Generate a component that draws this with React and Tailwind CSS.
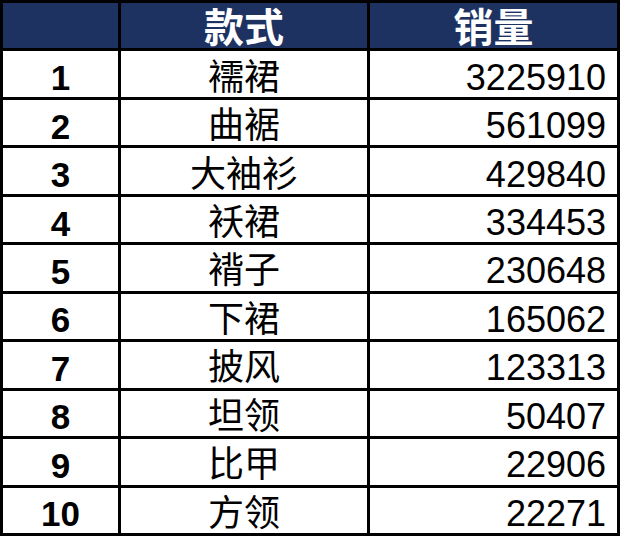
import React from "react";

const rows = [
  ["1", "襦裙", "3225910"],
  ["2", "曲裾", "561099"],
  ["3", "大袖衫", "429840"],
  ["4", "袄裙", "334453"],
  ["5", "褙子", "230648"],
  ["6", "下裙", "165062"],
  ["7", "披风", "123313"],
  ["8", "坦领", "50407"],
  ["9", "比甲", "22906"],
  ["10", "方领", "22271"],
];

const font = { fontFamily: '"Liberation Sans", "Noto Sans CJK SC", sans-serif' };

export default function App() {
  return (
    <div
      className="w-[620px] h-[536px] bg-black p-[3px] grid grid-cols-[115px_246px_1fr] grid-rows-11 gap-[3px]"
      style={font}
    >
      <div className="bg-[#1e3262]" />
      <div className="bg-[#1e3262] flex items-center justify-center text-white font-bold text-[40px] leading-none pt-[5px]">
        款式
      </div>
      <div className="bg-[#1e3262] flex items-center justify-center text-white font-bold text-[40px] leading-none pt-[5px]">
        销量
      </div>
      {rows.map(([n, name, v]) => (
        <React.Fragment key={n}>
          <div className="bg-white flex items-center justify-center text-black font-bold text-[35px] leading-none pt-[7px]">
            {n}
          </div>
          <div className="bg-white flex items-center justify-center text-black text-[36px] leading-none pt-[7px]">
            {name}
          </div>
          <div className="bg-white flex items-center justify-end pr-[11px] text-black text-[36px] leading-none pt-[7px]">
            {v}
          </div>
        </React.Fragment>
      ))}
    </div>
  );
}
